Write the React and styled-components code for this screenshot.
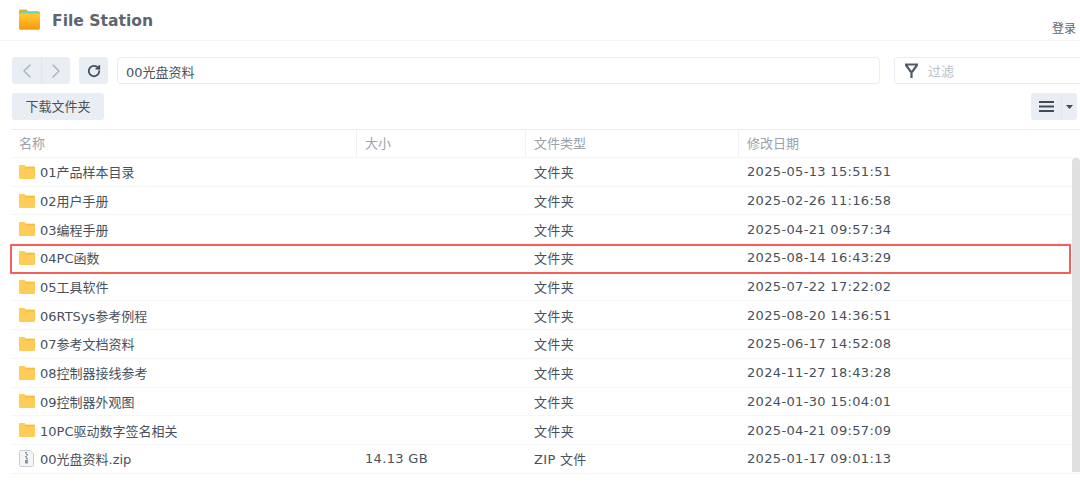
import React from 'react';
import styled, { createGlobalStyle } from 'styled-components';
import { ChevronLeft, ChevronRight, RotateCw } from 'lucide-react';

const GlobalStyle = createGlobalStyle`
  html, body {
    margin: 0;
    padding: 0;
    background: #fff;
    overflow: hidden;
  }
  body {
    font-family: "DejaVu Sans", "Noto Sans CJK SC", sans-serif;
    color: #47515b;
  }
`;

const Page = styled.div`
  position: relative;
  width: 1080px;
  height: 487px;
  overflow: hidden;
`;

const Header = styled.div`
  height: 41px;
  box-sizing: border-box;
  border-bottom: 1px solid #f1f3f5;
  display: flex;
  align-items: center;
  padding: 0 4px 0 18px;
  gap: 11px;
`;

const AppTitle = styled.div`
  font-size: 15.6px;
  font-weight: 700;
  color: #5d666f;
  flex: 1;
  margin-top: 1px;
`;

const Login = styled.div`
  font-size: 12px;
  color: #5d666f;
  align-self: flex-end;
  margin-bottom: 4px;
`;

const Toolbar = styled.div`
  display: flex;
  align-items: center;
  padding: 16px 0 0 12px;
  height: 27px;
`;

const ButtonGroup = styled.div`
  display: flex;
  height: 27px;
  border-radius: 3px;
  background: #e9eef4;
  margin-right: ${props => props.$gap || 0}px;
`;

const IconButton = styled.div`
  box-sizing: border-box;
  width: ${props => props.$width || 28}px;
  display: flex;
  align-items: center;
  justify-content: center;
  color: ${props => props.$muted ? '#aeb5bd' : '#414b55'};
  & + & {
    border-left: 1px solid #e0e6ec;
  }
`;

const PathBox = styled.div`
  width: 763px;
  height: 27px;
  box-sizing: border-box;
  border: 1px solid #e7edf3;
  border-radius: 4px;
  font-size: 13px;
  line-height: 25px;
  padding: 2px 0 0 8px;
  color: #4a545e;
  margin-right: 14px;
`;

const FilterBox = styled.div`
  flex: 1;
  height: 27px;
  box-sizing: border-box;
  border: 1px solid #e7edf3;
  border-right: none;
  border-radius: 4px 0 0 4px;
  display: flex;
  align-items: center;
  padding-left: 9px;
  gap: 9px;
  font-size: 13px;
  color: #b9c0c7;
`;

const ActionRow = styled.div`
  display: flex;
  justify-content: space-between;
  align-items: center;
  padding: 9px 3px 0 12px;
  height: 27px;
`;

const TextButton = styled.div`
  height: 27px;
  width: 92px;
  border-radius: 3px;
  background: #e9eef4;
  font-size: 13px;
  line-height: 28px;
  text-align: center;
  color: #47515b;
`;

const Table = styled.div`
  margin: 9px 0 0 11px;
  border-top: 1px solid #e8edf2;
`;

const HeadRow = styled.div`
  display: grid;
  grid-template-columns: 345px 169px 213px 1fr;
  height: 27px;
  border-bottom: 1px solid #f5f6f8;
`;

const HeadCell = styled.div`
  font-size: 13px;
  line-height: 28px;
  padding-left: 8px;
  color: #9aa3ab;
  & + & {
    border-left: 1px solid #eef1f5;
  }
`;

const Row = styled.div`
  display: grid;
  grid-template-columns: 345px 169px 213px 1fr;
  height: 28.7px;
  box-sizing: border-box;
  align-items: center;
  border-bottom: 1px solid #f5f6f8;
  font-size: 13px;
  color: #47515b;
`;

const NameCell = styled.div`
  display: flex;
  align-items: center;
  gap: 5px;
  padding-left: 8px;
`;

const Cell = styled.div`
  padding-left: 9px;
  letter-spacing: 0.33px;
`;

const BottomLine = styled.div`
  margin: 13px 0 0 11px;
  border-top: 1px solid #f0f2f5;
`;

const Scrollbar = styled.div`
  position: absolute;
  right: 0;
  top: 158px;
  width: 8px;
  height: 314px;
  background: #e0e0e0;
  border-radius: 4px 4px 0 0;
`;

const Highlight = styled.div`
  position: absolute;
  left: 10px;
  top: 244px;
  width: 1061px;
  height: 30px;
  box-sizing: border-box;
  border: 2px solid #f3605a;
  border-radius: 1px;
  pointer-events: none;
`;

const AppIcon = () => (
  <svg width="23" height="22" viewBox="0 0 23 22">
    <defs>
      <linearGradient id="appFolder" x1="0" y1="0" x2="0" y2="1">
        <stop offset="0" stopColor="#ffcb35" />
        <stop offset="1" stopColor="#f8980c" />
      </linearGradient>
    </defs>
    <path d="M1 2.500C1 1.400 1.800.600 2.800.600h5.600l1.600 1.600h10.200c1 0 1.800.8 1.800 1.800V6H1z" fill="#e3ab40" />
    <rect x="3" y="2.600" width="17" height="2" fill="#6ad6b8" />
    <path d="M1 4.600h21v14.400c0 1-.8 1.800-1.800 1.800H2.800c-1 0-1.800-.8-1.800-1.800z" fill="url(#appFolder)" />
  </svg>
);

const FolderIcon = () => (
  <svg width="16" height="14" viewBox="0 0 16 14" style={{ flexShrink: 0 }}>
    <path d="M0 1.200C0 .5.500 0 1.200 0h4.300l1.700 1.800h7.600c.7 0 1.200.5 1.200 1.200v9.800c0 .7-.5 1.200-1.200 1.200H1.200C.5 14 0 13.500 0 12.800z" fill="#fdcd57" />
    <path d="M0 3.400h16v-.4c0-.7-.5-1.200-1.200-1.200H7.200L5.500 3.400z" fill="#f7bd42" />
  </svg>
);

const ZipIcon = () => (
  <svg width="16" height="17" viewBox="0 0 16 17" style={{ flexShrink: 0 }}>
    <path d="M1.500.5h9.500l3.500 3.500v11.500a1 1 0 0 1-1 1h-12a1 1 0 0 1-1-1V1.500a1 1 0 0 1 1-1z" fill="#f3f5f7" stroke="#c8ced5" />
    <path d="M6 2h2v1.500H6zM7 4h2v1.500H7zM6 6h2v1.500H6zM7 8h2v1.500H7zM6 10h3v3.500H6z" fill="#8c959e" />
  </svg>
);

const FilterIcon = () => (
  <svg width="15" height="16" viewBox="0 0 15 16">
    <path d="M1 1.500h13M2 2l4.500 6.500h2L13 2M7.500 8v7" fill="none" stroke="#4f5a64" strokeWidth="2.200" />
  </svg>
);

const ListIcon = () => (
  <svg width="15" height="11" viewBox="0 0 15 11">
    <path d="M0 1h15M0 5.500h15M0 10h15" stroke="#414b55" strokeWidth="2" />
  </svg>
);

const Caret = () => (
  <svg width="7" height="4" viewBox="0 0 7 4">
    <path d="M0 0h7L3.500 4z" fill="#414b55" />
  </svg>
);

const files = [
  { name: '01产品样本目录', type: '文件夹', date: '2025-05-13 15:51:51' },
  { name: '02用户手册', type: '文件夹', date: '2025-02-26 11:16:58' },
  { name: '03编程手册', type: '文件夹', date: '2025-04-21 09:57:34' },
  { name: '04PC函数', type: '文件夹', date: '2025-08-14 16:43:29' },
  { name: '05工具软件', type: '文件夹', date: '2025-07-22 17:22:02' },
  { name: '06RTSys参考例程', type: '文件夹', date: '2025-08-20 14:36:51' },
  { name: '07参考文档资料', type: '文件夹', date: '2025-06-17 14:52:08' },
  { name: '08控制器接线参考', type: '文件夹', date: '2024-11-27 18:43:28' },
  { name: '09控制器外观图', type: '文件夹', date: '2024-01-30 15:04:01' },
  { name: '10PC驱动数字签名相关', type: '文件夹', date: '2025-04-21 09:57:09' },
  { name: '00光盘资料.zip', size: '14.13 GB', type: 'ZIP 文件', date: '2025-01-17 09:01:13', zip: true },
];

const App = () => (
  <Page>
    <GlobalStyle />
    <Header>
      <AppIcon />
      <AppTitle>File Station</AppTitle>
      <Login>登录</Login>
    </Header>
    <Toolbar>
      <ButtonGroup $gap={9}>
        <IconButton $muted $width={29}><ChevronLeft size={24} strokeWidth={1.5} /></IconButton>
        <IconButton $muted $width={29}><ChevronRight size={24} strokeWidth={1.5} /></IconButton>
      </ButtonGroup>
      <ButtonGroup $gap={9}>
        <IconButton $width={29}><RotateCw size={14} strokeWidth={3} /></IconButton>
      </ButtonGroup>
      <PathBox>00光盘资料</PathBox>
      <FilterBox><FilterIcon />过滤</FilterBox>
    </Toolbar>
    <ActionRow>
      <TextButton>下载文件夹</TextButton>
      <ButtonGroup>
        <IconButton $width={30}><ListIcon /></IconButton>
        <IconButton $width={16}><Caret /></IconButton>
      </ButtonGroup>
    </ActionRow>
    <Table>
      <HeadRow>
        <HeadCell>名称</HeadCell>
        <HeadCell>大小</HeadCell>
        <HeadCell>文件类型</HeadCell>
        <HeadCell>修改日期</HeadCell>
      </HeadRow>
      {files.map(file => (
        <Row key={file.name}>
          <NameCell>
            {file.zip ? <ZipIcon /> : <FolderIcon />}
            {file.name}
          </NameCell>
          <Cell>{file.size}</Cell>
          <Cell>{file.type}</Cell>
          <Cell>{file.date}</Cell>
        </Row>
      ))}
    </Table>
    <BottomLine />
    <Scrollbar />
    <Highlight />
  </Page>
);

export default App;
